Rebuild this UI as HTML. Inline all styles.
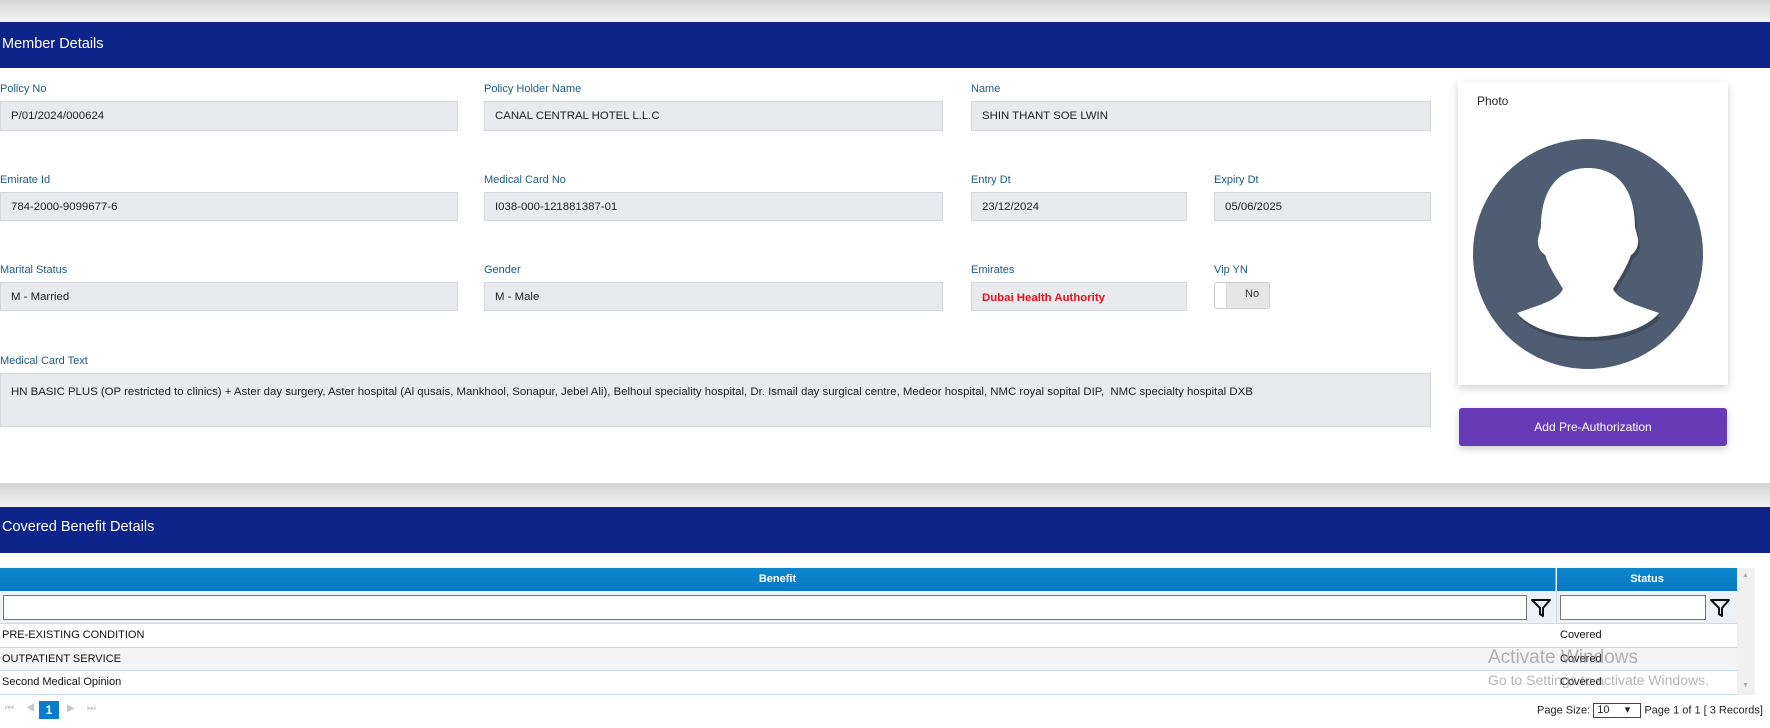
<!DOCTYPE html>
<html><head><meta charset="utf-8"><style>
*{box-sizing:border-box;margin:0;padding:0}
body{width:1770px;height:728px;overflow:hidden;background:#fff;font-family:"Liberation Sans",sans-serif;position:relative}
.abs{position:absolute}
.band{position:absolute;left:0;width:1770px;background:#0d258a;color:#fff;font-size:14.5px;padding-left:2px}
.lbl{position:absolute;font-size:11px;color:#1d5b86}
.inp{position:absolute;background:#e8eaed;border:1px solid #d3d6da;font-size:11.4px;color:#222;padding-left:10px;line-height:28px}
.th{position:absolute;top:568px;height:23px;background:linear-gradient(#0b86cc,#0a78c2);color:#fff;font-weight:bold;font-size:11px;text-align:center;line-height:23px}
.row{position:absolute;left:0;width:1737px;font-size:11px;color:#111;border-bottom:1px solid #c7d9ea;line-height:23px}
.row span{position:absolute;left:2px}
.row b{position:absolute;left:1560px;font-weight:normal}
</style></head><body>
<div class="abs" style="left:0;top:0;width:1770px;height:22px;background:linear-gradient(#d6d6d6,#f4f4f4)"></div>
<div class="band" style="top:22px;height:46px;line-height:44px">Member Details</div>

<div class="lbl" style="left:0;top:83px">Policy No</div>
<div class="inp" style="left:0;top:101px;width:458px;height:30px">P/01/2024/000624</div>
<div class="lbl" style="left:484px;top:83px">Policy Holder Name</div>
<div class="inp" style="left:484px;top:101px;width:459px;height:30px">CANAL CENTRAL HOTEL L.L.C</div>
<div class="lbl" style="left:971px;top:83px">Name</div>
<div class="inp" style="left:971px;top:101px;width:460px;height:30px">SHIN THANT SOE LWIN</div>

<div class="lbl" style="left:0;top:174px">Emirate Id</div>
<div class="inp" style="left:0;top:192px;width:458px;height:29px">784-2000-9099677-6</div>
<div class="lbl" style="left:484px;top:174px">Medical Card No</div>
<div class="inp" style="left:484px;top:192px;width:459px;height:29px">I038-000-121881387-01</div>
<div class="lbl" style="left:971px;top:174px">Entry Dt</div>
<div class="inp" style="left:971px;top:192px;width:216px;height:29px">23/12/2024</div>
<div class="lbl" style="left:1214px;top:174px">Expiry Dt</div>
<div class="inp" style="left:1214px;top:192px;width:217px;height:29px">05/06/2025</div>

<div class="lbl" style="left:0;top:264px">Marital Status</div>
<div class="inp" style="left:0;top:282px;width:458px;height:29px">M - Married</div>
<div class="lbl" style="left:484px;top:264px">Gender</div>
<div class="inp" style="left:484px;top:282px;width:459px;height:29px">M - Male</div>
<div class="lbl" style="left:971px;top:264px">Emirates</div>
<div class="inp" style="left:971px;top:282px;width:216px;height:29px;color:#e8101a;font-weight:bold;line-height:30px">Dubai Health Authority</div>
<div class="lbl" style="left:1214px;top:264px">Vip YN</div>
<div class="abs" style="left:1214px;top:282px;width:56px;height:27px;border:1px solid #ccc;border-radius:3px;background:#e6e6e6;font-size:11px;color:#333;line-height:22px;padding-left:30px">No</div>
<div class="abs" style="left:1215px;top:283px;width:12px;height:25px;background:#fff;border-radius:3px 0 0 3px;border-right:1px solid #ddd"></div>

<div class="lbl" style="left:0;top:355px">Medical Card Text</div>
<div class="inp" style="left:0;top:373px;width:1431px;height:54px;line-height:16px;padding-top:10px">HN BASIC PLUS (OP restricted to clinics) + Aster day surgery, Aster hospital (Al qusais, Mankhool, Sonapur, Jebel Ali), Belhoul speciality hospital, Dr. Ismail day surgical centre, Medeor hospital, NMC royal sopital DIP,&nbsp; NMC specialty hospital DXB</div>

<div class="abs" style="left:1458px;top:82px;width:270px;height:303px;background:#fff;box-shadow:0 3px 8px rgba(0,0,0,.18)">
<div class="abs" style="left:19px;top:12px;font-size:12px;color:#222">Photo</div>
<svg class="abs" style="left:15px;top:57px" width="232" height="232" viewBox="0 0 232 232">
<circle cx="115" cy="115" r="115" fill="#4e5d72"/>
<path d="M44 174 C66 166 84 162 90 150 C84 140 76 128 72 116 C66 112 63 104 66 96 L68 88 C68 50 86 29 115 29 C144 29 162 50 162 88 L164 96 C167 104 164 112 158 116 C154 128 146 140 140 150 C146 162 164 166 186 174 C160 206 70 206 44 174 Z" fill="#3d4a5b" transform="translate(2,4)"/>
<path d="M44 174 C66 166 84 162 90 150 C84 140 76 128 72 116 C66 112 63 104 66 96 L68 88 C68 50 86 29 115 29 C144 29 162 50 162 88 L164 96 C167 104 164 112 158 116 C154 128 146 140 140 150 C146 162 164 166 186 174 C160 206 70 206 44 174 Z" fill="#fff"/>
</svg>
</div>
<div class="abs" style="left:1459px;top:408px;width:268px;height:38px;background:#673ab7;border-radius:3px;color:#fff;font-size:12px;text-align:center;line-height:38px;box-shadow:0 3px 8px rgba(0,0,0,.2)">Add Pre-Authorization</div>

<div class="abs" style="left:0;top:483px;width:1770px;height:24px;background:linear-gradient(#d4d4d4,#f2f2f2)"></div>
<div class="band" style="top:507px;height:46px;line-height:40px">Covered Benefit Details</div>

<div class="th" style="left:0;width:1556px;border-right:1px solid #6fb2e0">Benefit</div>
<div class="th" style="left:1557px;width:180px">Status</div>
<div class="abs" style="left:0;top:591px;width:1737px;height:33px;background:#eef1f5;border-bottom:1px solid #c7d9ea"></div>
<div class="abs" style="left:3px;top:595px;width:1524px;height:25px;background:#fff;border:1px solid #777"></div>
<svg class="abs" style="left:1530px;top:597px" width="22" height="22" viewBox="0 0 22 22"><path d="M2 3 H20 L13 11 V19 L10 17 V11 Z" fill="none" stroke="#111" stroke-width="2" stroke-linejoin="round"/></svg>
<div class="abs" style="left:1556px;top:591px;width:1px;height:104px;background:#c7d9ea"></div>
<div class="abs" style="left:1560px;top:595px;width:146px;height:25px;background:#fff;border:1px solid #777"></div>
<svg class="abs" style="left:1709px;top:597px" width="22" height="22" viewBox="0 0 22 22"><path d="M2 3 H20 L13 11 V19 L10 17 V11 Z" fill="none" stroke="#111" stroke-width="2" stroke-linejoin="round"/></svg>
<div class="row" style="top:624px;height:24px;background:#fff"><span>PRE-EXISTING CONDITION</span><b>Covered</b></div>
<div class="row" style="top:648px;height:23px;background:#f4f4f4"><span>OUTPATIENT SERVICE</span><b>Covered</b></div>
<div class="row" style="top:671px;height:24px;background:#fff"><span>Second Medical Opinion</span><b>Covered</b></div>
<div class="abs" style="left:1737px;top:568px;width:18px;height:127px;background:#f0f0f0"></div>
<div class="abs" style="left:1742px;top:572px;font-size:7px;color:#aaa">▲</div>
<div class="abs" style="left:1742px;top:682px;font-size:7px;color:#aaa">▼</div>
<div class="abs" style="left:1488px;top:647px;font-size:19px;color:rgba(120,120,120,.55)">Activate Windows</div>
<div class="abs" style="left:1488px;top:672px;font-size:14px;color:rgba(120,120,120,.55)">Go to Settings to activate Windows.</div>

<div class="abs" style="left:5px;top:703px;font-size:10px;color:#c4c9cf;letter-spacing:12px">⏮◀</div>
<div class="abs" style="left:39px;top:701px;width:20px;height:18px;background:#0a7cd0;color:#fff;font-size:12px;font-weight:bold;text-align:center;line-height:18px">1</div>
<div class="abs" style="left:67px;top:703px;font-size:10px;color:#c4c9cf;letter-spacing:12px">▶⏭</div>
<div class="abs" style="left:1537px;top:703px;font-size:11px;color:#222">Page Size: <span style="display:inline-block;border:1px solid #444;width:48px;height:15px;vertical-align:middle;padding-left:3px;line-height:13px">10 &nbsp; &nbsp; ▾</span> Page 1 of 1 [ 3 Records]</div>
</body></html>
